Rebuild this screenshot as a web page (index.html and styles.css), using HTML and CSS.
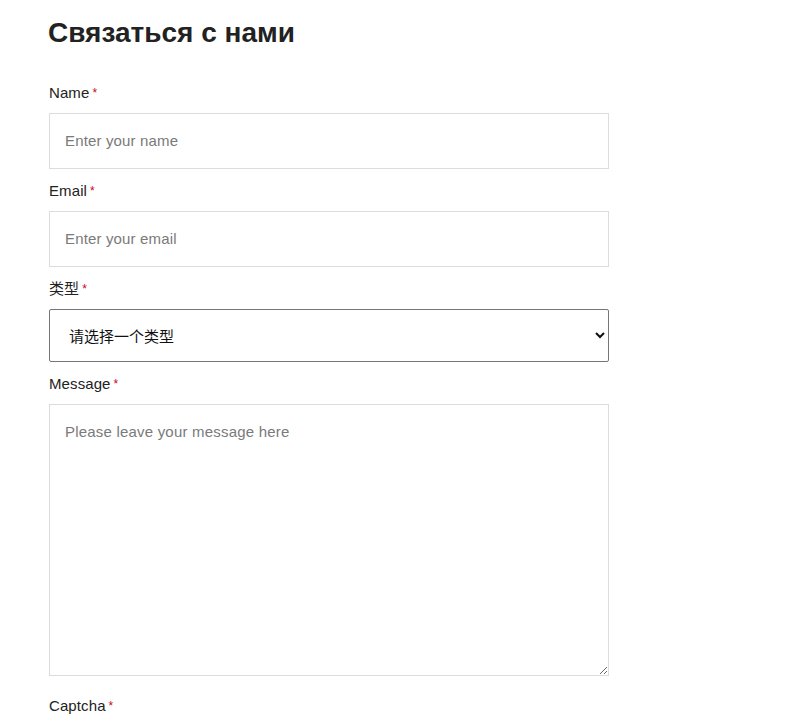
FILE: index.html
```html
<!DOCTYPE html>
<html lang="ru">
<head>
<meta charset="utf-8">
<link rel="stylesheet" href="styles.css">
</head>
<body>
<main class="page">
  <h1 class="title">Связаться с нами</h1>
  <form class="form">
    <label class="label">Name<span class="req">*</span></label>
    <input class="field" type="text" placeholder="Enter your name">
    <label class="label">Email<span class="req">*</span></label>
    <input class="field" type="email" placeholder="Enter your email">
    <label class="label">类型<span class="req">*</span></label>
    <select class="select">
      <option>请选择一个类型</option>
    </select>
    <label class="label">Message<span class="req">*</span></label>
    <textarea class="area" placeholder="Please leave your message here"></textarea>
    <label class="label label-cap">Captcha<span class="req">*</span></label>
  </form>
</main>
</body>
</html>
```

FILE: styles.css
```css
html, body {
  margin: 0;
  padding: 0;
  background: #fff;
}
body {
  font-family: "Liberation Sans", "Noto Sans CJK SC", sans-serif;
  color: #222;
}
.page {
  padding: 15px 0 0 48px;
  width: 561px;
}
.title {
  margin: 0 0 30px 0;
  font-size: 28px;
  line-height: 36px;
  font-weight: 700;
  color: #222;
  font-family: "Liberation Sans", "Noto Sans CJK SC", sans-serif;
}
.form {
  display: flex;
  flex-direction: column;
  padding-left: 1px;
}
.label {
  font-size: 15px;
  line-height: 21px;
  color: #222;
  padding-top: 1px;
  margin-bottom: 9px;
  letter-spacing: 0.1px;
}
.req {
  color: #d0021b;
  font-size: 12px;
  margin-left: 3px;
  vertical-align: 1px;
}
.field {
  box-sizing: border-box;
  height: 56px;
  width: 560px;
  border: 1px solid #dcdcdc;
  border-radius: 0;
  padding: 0 15px 1px;
  font-size: 15px;
  letter-spacing: 0.15px;
  font-family: "Liberation Sans", sans-serif;
  color: #222;
  margin: 0 0 10px 0;
  outline: none;
}
.field::placeholder, .area::placeholder {
  color: #7a7a7a;
}
.select {
  box-sizing: border-box;
  height: 53px;
  width: 560px;
  border: 1px solid #767676;
  border-radius: 2px;
  padding: 0 15px;
  font-size: 15px;
  font-family: "Noto Sans CJK SC", sans-serif;
  color: #111;
  background: #fff;
  margin: 0 0 10px 0;
}
.area {
  box-sizing: border-box;
  height: 272px;
  width: 560px;
  border: 1px solid #dcdcdc;
  padding: 18px 15px;
  font-size: 15px;
  letter-spacing: 0.2px;
  font-family: "Liberation Sans", sans-serif;
  margin: 0 0 18px 0;
  resize: vertical;
  outline: none;
}
.label-cap {
  margin-bottom: 0;
}
```
